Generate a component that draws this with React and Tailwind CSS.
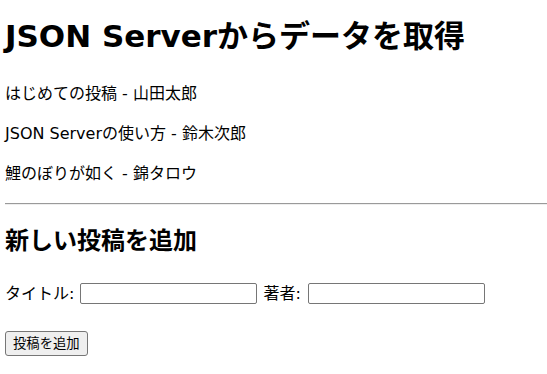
export default function App() {
  const font = { fontFamily: '"DejaVu Sans", "Noto Sans CJK JP", sans-serif' };
  return (
    <div className="min-h-screen bg-white pl-[5px] pt-[14px] text-black" style={font}>
      <h1 className="h-[44px] text-[31px] font-bold leading-[44px] whitespace-nowrap">JSON Serverからデータを取得</h1>
      <div className="mt-[24px] flex flex-col gap-[16px] text-[16px]">
        <p className="leading-[24px]">はじめての投稿 - 山田太郎</p>
        <p className="leading-[24px]">JSON Serverの使い方 - 鈴木次郎</p>
        <p className="leading-[24px]">鯉のぼりが如く - 錦タロウ</p>
      </div>
      <hr className="mt-[17px] h-[2px] border-0 border-t border-b border-t-[#9a9a9a] border-b-[#eeeeee]" />
      <h2 className="mt-[21px] h-[30px] text-[24px] font-bold leading-[30px]">新しい投稿を追加</h2>
      <div className="mt-[27px] flex h-[21px] items-center text-[16px]">
        <span>タイトル:</span>
        <input className="ml-[6px] h-[21px] w-[177px] rounded-[2px] border border-[#767676] bg-white" />
        <span className="ml-[6px]">著者:</span>
        <input className="ml-[7px] h-[21px] w-[177px] rounded-[2px] border border-[#767676] bg-white" />
      </div>
      <button className="mt-[27px] h-[25px] rounded-[3px] border border-[#767676] bg-[#efefef] px-[7px] text-[13.33px] leading-[23px]">投稿を追加</button>
    </div>
  );
}
